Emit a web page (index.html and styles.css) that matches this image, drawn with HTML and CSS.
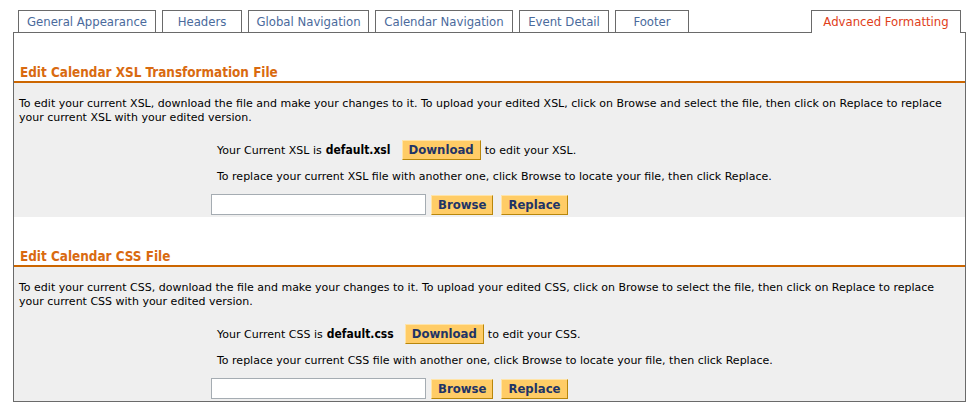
FILE: index.html
```html
<!DOCTYPE html>
<html>
<head>
<meta charset="utf-8">
<link rel="stylesheet" href="styles.css">
</head>
<body>
<div class="page">
  <div class="tabs">
    <div class="tab tab-ga">General Appearance</div>
    <div class="tab tab-hd">Headers</div>
    <div class="tab tab-gn">Global Navigation</div>
    <div class="tab tab-cn">Calendar Navigation</div>
    <div class="tab tab-ed">Event Detail</div>
    <div class="tab tab-ft">Footer</div>
    <div class="tab tab-active">Advanced Formatting</div>
  </div>
  <div class="panel">
    <div class="section">
      <h2 class="heading">Edit Calendar XSL Transformation File</h2>
      <div class="body">
        <p class="intro">To edit your current XSL, download the file and make your changes to it. To upload your edited XSL, click on Browse and select the file, then click on Replace to replace your current XSL with your edited version.</p>
        <div class="form">
          <div class="row-current">Your Current XSL is <b class="fname">default.xsl</b><button class="btn btn-dl">Download</button>to edit your XSL.</div>
          <div class="row-text">To replace your current XSL file with another one, click Browse to locate your file, then click Replace.</div>
          <div class="row-input"><input class="file" type="text"><button class="btn">Browse</button><button class="btn btn-rep">Replace</button></div>
        </div>
      </div>
    </div>
    <div class="section">
      <h2 class="heading">Edit Calendar CSS File</h2>
      <div class="body">
        <p class="intro">To edit your current CSS, download the file and make your changes to it. To upload your edited CSS, click on Browse to select the file, then click on Replace to replace your current CSS with your edited version.</p>
        <div class="form">
          <div class="row-current">Your Current CSS is <b class="fname">default.css</b><button class="btn btn-dl">Download</button>to edit your CSS.</div>
          <div class="row-text">To replace your current CSS file with another one, click Browse to locate your file, then click Replace.</div>
          <div class="row-input"><input class="file" type="text"><button class="btn">Browse</button><button class="btn btn-rep">Replace</button></div>
        </div>
      </div>
    </div>
  </div>
</div>
</body>
</html>
```
FILE: styles.css
```css
* { box-sizing: border-box; }
body {
  margin: 0;
  background: #fff;
  font-family: "DejaVu Sans", sans-serif;
  color: #000;
}
.page {
  padding: 10px 12px 0 13px;
}
.tabs {
  display: flex;
  gap: 6px;
  padding: 0 5px;
  height: 22px;
}
.tab {
  height: 22px;
  border: 1px solid #6a6a6a;
  border-bottom: none;
  font-family: "DejaVu Sans Condensed", "DejaVu Sans", sans-serif;
  font-size: 13px;
  line-height: 21px;
  color: #4a6a9c;
  background: #fff;
  white-space: nowrap;
  text-align: center;
}
.tab-ga { width: 138px; }
.tab-hd { width: 80px; }
.tab-gn { width: 121px; }
.tab-cn { width: 138px; }
.tab-ed { width: 90px; }
.tab-ft { width: 74px; }
.tab-active {
  width: 150px;
  margin-left: auto;
  height: 23px;
  color: #e0401a;
  position: relative;
  z-index: 1;
}
.panel {
  border: 1px solid #6a6a6a;
  height: 370px;
}
.section { padding-top: 31px; }
.heading {
  margin: 0;
  padding: 1px 0 0 6px;
  font-family: "DejaVu Sans Condensed", "DejaVu Sans", sans-serif;
  font-size: 13.4px;
  line-height: 16px;
  font-weight: bold;
  color: #d96a10;
  border-bottom: 2px solid #cc6600;
}
.body {
  background: #efefef;
  height: 134px;
  padding: 14px 4px 0 5px;
  font-size: 11px;
}
.intro {
  margin: 0;
  line-height: 14px;
}
.form {
  margin: 15px 0 0 192px;
}
.row-current {
  display: flex;
  align-items: center;
  height: 20px;
  padding-left: 6px;
  white-space: nowrap;
}
.fname {
  font-family: "DejaVu Sans Condensed", "DejaVu Sans", sans-serif;
  font-weight: bold;
  font-size: 12px;
  margin-left: 4px;
}
.row-text {
  padding-left: 6px;
  margin-top: 10px;
  line-height: 14px;
  white-space: nowrap;
}
.row-input {
  display: flex;
  align-items: center;
  margin-top: 10px;
}
.file {
  width: 215px;
  height: 21px;
  border: 1px solid #a5acb2;
  background: #fff;
  margin: 0;
  padding: 0;
}
.btn {
  font-family: "DejaVu Sans Condensed", "DejaVu Sans", sans-serif;
  font-size: 13px;
  font-weight: bold;
  color: #1f3466;
  background: #ffcc66;
  border: 1px solid;
  border-color: #ffe4a8 #b8860b #b8860b #ffe4a8;
  height: 20px;
  padding: 0 6px;
  margin: 0 0 0 5px;
  line-height: 18px;
}
.btn-dl { margin: 0 4px 0 11px; }
.btn-rep { margin-left: 8px; }
```
